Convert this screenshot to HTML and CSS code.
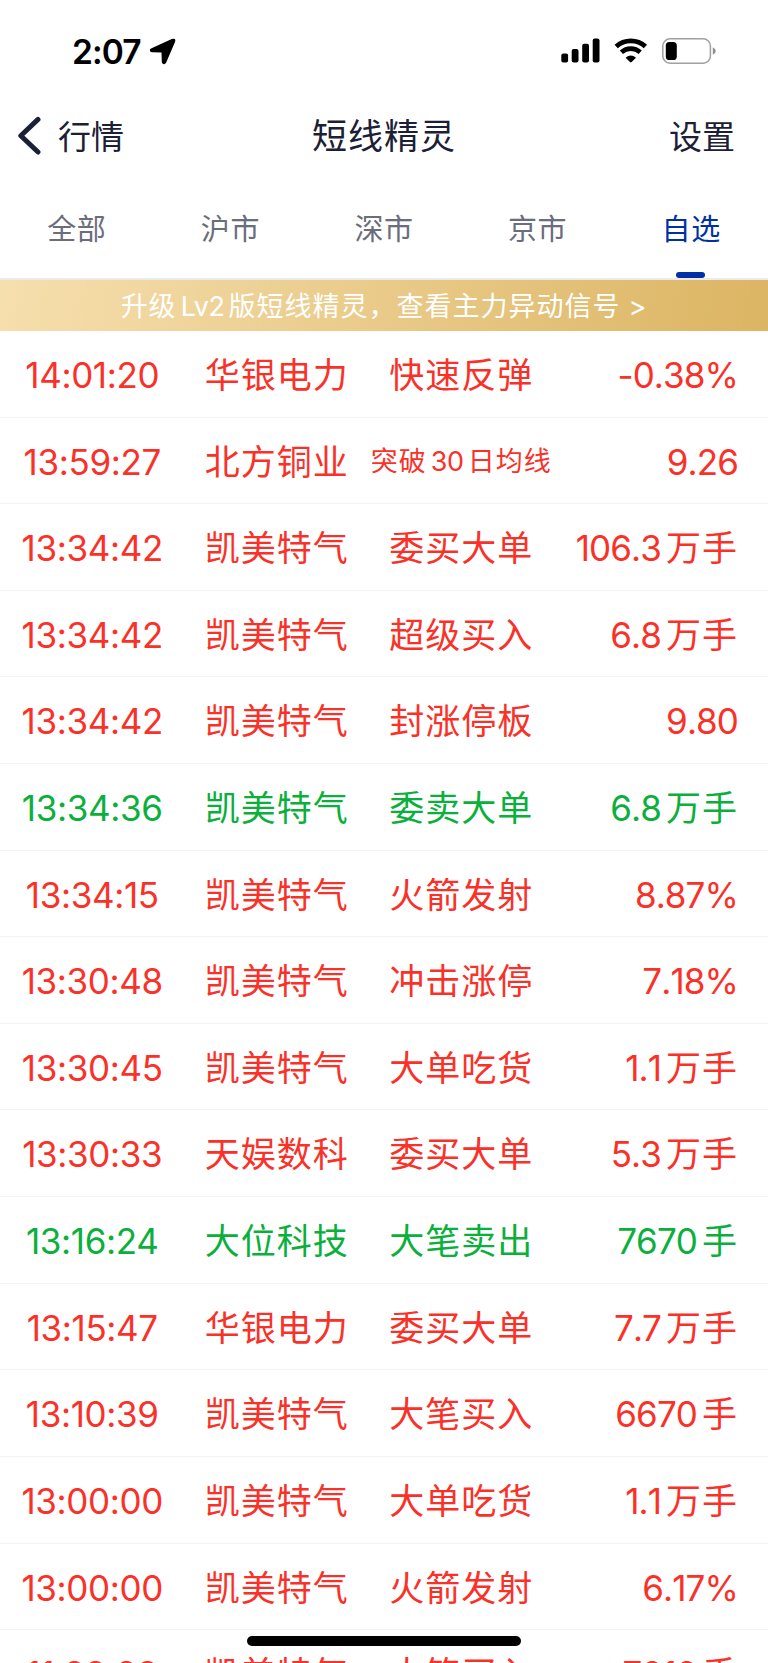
FILE: index.html
```html
<!DOCTYPE html>
<html lang="zh-CN">
<head>
    <meta charset="UTF-8">
    <meta name="viewport" content="width=device-width, initial-scale=1.0">
    <title>短线精灵</title>
    <link rel="stylesheet" href="styles.css">
</head>
<body>
    <div class="status-bar">
        <span class="clock">2:07</span>
        <svg class="location" width="28" height="28" viewBox="0 0 28 28">
            <path d="M2 11.4 22.8 2 Q27.4 .6 26 5 L17.2 25.4 Q16.4 27.2 14.8 27.2 Q13 27 12.8 25 L12.5 15.4 3.2 15.2 Q.9 15 .8 13.2 Q.8 12 2 11.4Z"/>
        </svg>
        <div class="status-icons">
            <svg width="39" height="26" viewBox="0 0 39 26">
                <rect x=".3" y="15.6" width="6.8" height="8.9" rx="2"/>
                <rect x="10.7" y="11" width="6.8" height="13.5" rx="2"/>
                <rect x="21.2" y="5.8" width="6.8" height="18.7" rx="2"/>
                <rect x="31.7" y=".5" width="6.8" height="24" rx="2"/>
            </svg>
            <svg class="wifi" width="34" height="26" viewBox="0 0 34 26">
                <path d="M2.2 8.6 A21.5 21.5 0 0 1 31.4 8.6" fill="none" stroke="#000" stroke-width="4.8"/>
                <path d="M7.4 14.3 A13.8 13.8 0 0 1 26.2 14.3" fill="none" stroke="#000" stroke-width="4.6"/>
                <path d="M11.6 19.8 Q16.8 15.4 22 19.8 L17.6 24.1 Q16.8 24.8 16 24.1Z"/>
            </svg>
            <svg class="battery" width="55" height="26" viewBox="0 0 55 26">
                <rect x=".8" y=".8" width="47.6" height="24.4" rx="7.2" fill="none" stroke="#a0a0a0" stroke-width="1.5"/>
                <rect x="3.8" y="4" width="11" height="18" rx="3.6"/>
                <path d="M50.8 9.2 Q53.8 10.6 53.8 13 Q53.8 15.4 50.8 16.8Z" fill="#909090"/>
            </svg>
        </div>
    </div>

    <div class="nav">
        <a class="back" href="#">
            <svg width="24" height="40" viewBox="0 0 24 40">
                <path d="M20 3.4 2.8 19.8 20 36" fill="none" stroke="#1b2036" stroke-width="5" stroke-linecap="round" stroke-linejoin="round"/>
            </svg>
            <span>行情</span>
        </a>
        <h1>短线精灵</h1>
        <a class="settings" href="#">设置</a>
    </div>

    <div class="tabs">
        <a class="tab" href="#">全部</a>
        <a class="tab" href="#">沪市</a>
        <a class="tab" href="#">深市</a>
        <a class="tab" href="#">京市</a>
        <a class="tab active" href="#">自选</a>
    </div>

    <a class="banner" href="#">升级<span class="latin">Lv2</span>版短线精灵，查看主力异动信号<span class="arrow">&gt;</span></a>

    <div class="list">
        <div class="row"><span class="time">14:01:20</span><span>华银电力</span><span>快速反弹</span><span class="value">-0.38%</span></div>
        <div class="row"><span class="time">13:59:27</span><span>北方铜业</span><span class="small">突破<b>30</b>日均线</span><span class="value">9.26</span></div>
        <div class="row"><span class="time">13:34:42</span><span>凯美特气</span><span>委买大单</span><span class="value">106.3<i>万手</i></span></div>
        <div class="row"><span class="time">13:34:42</span><span>凯美特气</span><span>超级买入</span><span class="value">6.8<i>万手</i></span></div>
        <div class="row"><span class="time">13:34:42</span><span>凯美特气</span><span>封涨停板</span><span class="value">9.80</span></div>
        <div class="row down"><span class="time">13:34:36</span><span>凯美特气</span><span>委卖大单</span><span class="value">6.8<i>万手</i></span></div>
        <div class="row"><span class="time">13:34:15</span><span>凯美特气</span><span>火箭发射</span><span class="value">8.87%</span></div>
        <div class="row"><span class="time">13:30:48</span><span>凯美特气</span><span>冲击涨停</span><span class="value">7.18%</span></div>
        <div class="row"><span class="time">13:30:45</span><span>凯美特气</span><span>大单吃货</span><span class="value">1.1<i>万手</i></span></div>
        <div class="row"><span class="time">13:30:33</span><span>天娱数科</span><span>委买大单</span><span class="value">5.3<i>万手</i></span></div>
        <div class="row down"><span class="time">13:16:24</span><span>大位科技</span><span>大笔卖出</span><span class="value">7670<i>手</i></span></div>
        <div class="row"><span class="time">13:15:47</span><span>华银电力</span><span>委买大单</span><span class="value">7.7<i>万手</i></span></div>
        <div class="row"><span class="time">13:10:39</span><span>凯美特气</span><span>大笔买入</span><span class="value">6670<i>手</i></span></div>
        <div class="row"><span class="time">13:00:00</span><span>凯美特气</span><span>大单吃货</span><span class="value">1.1<i>万手</i></span></div>
        <div class="row"><span class="time">13:00:00</span><span>凯美特气</span><span>火箭发射</span><span class="value">6.17%</span></div>
        <div class="row"><span class="time">11:28:28</span><span>凯美特气</span><span>大笔买入</span><span class="value">7010<i>手</i></span></div>
    </div>

    <div class="home-indicator"></div>
</body>
</html>
```
FILE: styles.css
```css
* {
    box-sizing: border-box;
}
body {
    margin: 0;
    height: 1663px;
    overflow: hidden;
    position: relative;
    background-color: #fff;
    color: #1b2036;
    font-family: Inter, "Noto Sans CJK SC", sans-serif;
}
a {
    color: inherit;
    text-decoration: none;
}
.status-bar {
    display: flex;
    align-items: center;
    height: 102px;
    padding: 0 51px 0 72px;
    color: #000;
}
.clock {
    padding-top: 1px;
    font-size: 33.5px;
    font-weight: 600;
    letter-spacing: -0.9px;
}
.location {
    margin-left: 8px;
}
.status-icons {
    display: flex;
    margin-left: auto;
}
.wifi {
    margin-left: 14px;
}
.battery {
    margin-left: 14px;
}
.nav {
    display: grid;
    grid-template-columns: 1fr auto 1fr;
    height: 68px;
    padding: 0 33px 0 18px;
    font-size: 33px;
    line-height: 70px;
}
.back {
    display: flex;
    align-items: center;
    gap: 16px;
}
.back svg {
    margin-bottom: 2px;
}
.nav h1 {
    margin: 0 0 0 15px;
    font-size: 35px;
    font-weight: 400;
    line-height: 68px;
    letter-spacing: 1px;
}
.settings {
    text-align: right;
}
.tabs {
    display: grid;
    grid-template-columns: repeat(5, 1fr);
    height: 110px;
    border-bottom: 2px solid #ebebed;
}
.tab {
    position: relative;
    padding-top: 5px;
    font-size: 29px;
    line-height: 110px;
    height: 108px;
    text-align: center;
    letter-spacing: 0.6px;
    color: #6b6d7d;
}
.tab.active {
    color: #0030a8;
}
.tab.active::after {
    content: "";
    position: absolute;
    bottom: 0;
    left: 62px;
    width: 29px;
    height: 6px;
    border-radius: 3px;
    background-color: #0030a8;
}
.banner {
    display: flex;
    justify-content: center;
    height: 51px;
    background: linear-gradient(100deg, #f6dfae, #dcb563);
    color: #fff;
    font-size: 27px;
    line-height: 53px;
    letter-spacing: 1px;
}
.latin {
    margin: 0 4px;
    letter-spacing: -0.4px;
}
.arrow {
    margin-left: 8px;
}
.row {
    display: grid;
    grid-template-columns: repeat(4, 184.5px);
    height: 86.62px;
    border-bottom: 1px solid #f3f3f4;
    color: #fa3129;
    font-size: 35px;
    line-height: 88px;
    letter-spacing: 1px;
    text-align: center;
    white-space: nowrap;
}
.row.down {
    color: #0aaf3c;
}
.row .time {
    letter-spacing: -0.35px;
}
.row .small {
    font-size: 27px;
}
.small b {
    margin: 0 4px;
    font-weight: 400;
    letter-spacing: -0.3px;
}
.row .value {
    text-align: right;
    letter-spacing: -0.9px;
    font-kerning: none;
}
.value i {
    margin-left: 5px;
    font-style: normal;
    letter-spacing: 1px;
}
.home-indicator {
    position: absolute;
    left: 247px;
    top: 1636px;
    width: 274px;
    height: 10px;
    border-radius: 5px;
    background-color: #000;
}
```
